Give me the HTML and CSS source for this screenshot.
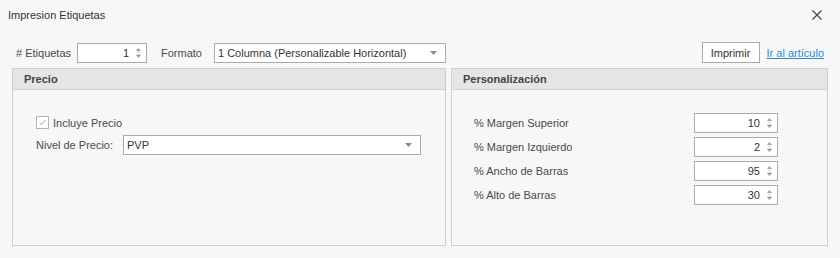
FILE: index.html
```html
<!DOCTYPE html>
<html lang="es">
<head>
  <meta charset="UTF-8">
  <title>Impresion Etiquetas</title>
  <link rel="stylesheet" href="styles.css">
</head>
<body>
  <div class="titlebar">
    <span class="title">Impresion Etiquetas</span>
    <svg class="close" width="10" height="10" viewBox="0 0 10 10">
      <path d="M0.5 0.5 L9.5 9.5 M9.5 0.5 L0.5 9.5" stroke="#444" stroke-width="1.2" fill="none"/>
    </svg>
  </div>

  <div class="toolbar">
    <span class="lbl-etiq">&#35; Etiquetas</span>
    <div class="spin spin-etiq">
      <span class="val">1</span>
      <svg class="arrows" width="7" height="12" viewBox="0 0 7 12">
        <path d="M3.5 1 L6 4 L1 4 Z" fill="#9a9a9a"/>
        <path d="M1.5 5.5 H5.5 M1.5 7.5 H5.5" stroke="#d8d8d8" stroke-width="1"/>
        <path d="M1 8 L6 8 L3.5 11 Z" fill="#9a9a9a"/>
      </svg>
    </div>
    <span class="lbl-formato">Formato</span>
    <div class="combo combo-formato">
      <span class="val">1 Columna (Personalizable Horizontal)</span>
      <svg class="drop" width="7" height="4" viewBox="0 0 7 4"><path d="M0 0 H7 L3.5 4 Z" fill="#8a8a8a"/></svg>
    </div>
    <div class="spacer"></div>
    <button class="btn">Imprimir</button>
    <a class="link" href="#">Ir al art&iacute;culo</a>
  </div>

  <div class="panels">
    <section class="panel panel-precio">
      <div class="panel-head">Precio</div>
      <div class="panel-body">
        <label class="check-row">
          <span class="check">
            <svg width="11" height="11" viewBox="0 0 11 11"><path d="M2.5 5.5 L4.5 7.5 L8.5 3" stroke="#a6a6a6" stroke-width="1" fill="none"/></svg>
          </span>
          Incluye Precio
        </label>
        <div class="field-row">
          <span class="lbl-nivel">Nivel de Precio:</span>
          <div class="combo combo-nivel">
            <span class="val">PVP</span>
            <svg class="drop" width="7" height="4" viewBox="0 0 7 4"><path d="M0 0 H7 L3.5 4 Z" fill="#8a8a8a"/></svg>
          </div>
        </div>
      </div>
    </section>

    <section class="panel panel-pers">
      <div class="panel-head">Personalizaci&oacute;n</div>
      <div class="panel-body grid">
        <span>% Margen Superior</span>
        <div class="spin"><span class="val">10</span><svg class="arrows" width="7" height="12" viewBox="0 0 7 12"><path d="M3.5 1 L6 4 L1 4 Z" fill="#9a9a9a"/><path d="M1.5 5.5 H5.5 M1.5 7.5 H5.5" stroke="#d8d8d8" stroke-width="1"/><path d="M1 8 L6 8 L3.5 11 Z" fill="#9a9a9a"/></svg></div>
        <span>% Margen Izquierdo</span>
        <div class="spin"><span class="val">2</span><svg class="arrows" width="7" height="12" viewBox="0 0 7 12"><path d="M3.5 1 L6 4 L1 4 Z" fill="#9a9a9a"/><path d="M1.5 5.5 H5.5 M1.5 7.5 H5.5" stroke="#d8d8d8" stroke-width="1"/><path d="M1 8 L6 8 L3.5 11 Z" fill="#9a9a9a"/></svg></div>
        <span>% Ancho de Barras</span>
        <div class="spin"><span class="val">95</span><svg class="arrows" width="7" height="12" viewBox="0 0 7 12"><path d="M3.5 1 L6 4 L1 4 Z" fill="#9a9a9a"/><path d="M1.5 5.5 H5.5 M1.5 7.5 H5.5" stroke="#d8d8d8" stroke-width="1"/><path d="M1 8 L6 8 L3.5 11 Z" fill="#9a9a9a"/></svg></div>
        <span>% Alto de Barras</span>
        <div class="spin"><span class="val">30</span><svg class="arrows" width="7" height="12" viewBox="0 0 7 12"><path d="M3.5 1 L6 4 L1 4 Z" fill="#9a9a9a"/><path d="M1.5 5.5 H5.5 M1.5 7.5 H5.5" stroke="#d8d8d8" stroke-width="1"/><path d="M1 8 L6 8 L3.5 11 Z" fill="#9a9a9a"/></svg></div>
      </div>
    </section>
  </div>
</body>
</html>
```

FILE: styles.css
```css
body {
  margin: 0;
  background-color: #f7f7f7;
  font-family: 'Liberation Sans', Arial, sans-serif;
  font-size: 11px;
  color: #4a4a4a;
}
.titlebar {
  height: 30px;
  display: flex;
  align-items: center;
  padding: 0 18px 0 8px;
}
.title {
  flex: 1;
  color: #333;
}
.close {
  display: block;
}
.toolbar {
  display: flex;
  align-items: center;
  height: 21px;
  margin-top: 12px;
  padding: 0 16px;
}
.lbl-etiq {
  width: 55px;
  white-space: nowrap;
  margin-right: 6px;
}
.lbl-formato {
  margin-left: 14px;
  width: 53px;
}
.spin, .combo {
  box-sizing: border-box;
  height: 20px;
  background-color: #fff;
  border: 1px solid #ababab;
  display: flex;
  align-items: center;
  color: #333;
}
.spin {
  width: 84px;
  justify-content: flex-end;
  padding-right: 4px;
}
.spin .val {
  margin-right: 6px;
}
.spin-etiq {
  width: 70px;
}
.arrows {
  display: block;
}
.combo {
  padding: 0 8px 0 3px;
}
.combo .val {
  flex: 1;
  white-space: nowrap;
}
.combo-formato {
  width: 232px;
}
.spacer {
  flex: 1;
}
.btn {
  box-sizing: border-box;
  width: 58px;
  height: 21px;
  background-color: #fff;
  border: 1px solid #ababab;
  font-family: inherit;
  font-size: 11px;
  color: #333;
  padding: 0;
}
.link {
  margin-left: 7px;
  color: #2a8ad8;
  text-decoration: underline;
}
.panels {
  display: flex;
  gap: 5px;
  margin-top: 5px;
  padding: 0 12px;
  height: 178px;
}
.panel {
  box-sizing: border-box;
  border: 1px solid #cecece;
  display: flex;
  flex-direction: column;
}
.panel-precio {
  width: 434px;
}
.panel-pers {
  flex: 1;
}
.panel-head {
  height: 20px;
  background-color: #e5e5e5;
  border-bottom: 1px solid #d2d2d2;
  font-weight: bold;
  color: #444;
  display: flex;
  align-items: center;
  padding-left: 11px;
}
.panel-precio .panel-body {
  padding: 26px 0 0 23px;
}
.check-row {
  display: flex;
  align-items: center;
  gap: 4px;
  height: 13px;
}
.check {
  box-sizing: border-box;
  width: 13px;
  height: 13px;
  border: 1px solid #b5b5b5;
  background-color: #fff;
  display: flex;
  align-items: center;
  justify-content: center;
}
.check svg {
  display: block;
}
.field-row {
  display: flex;
  align-items: center;
  margin-top: 6px;
}
.lbl-nivel {
  width: 87px;
}
.combo-nivel {
  width: 298px;
}
.grid {
  display: grid;
  grid-template-columns: 220px 84px;
  grid-auto-rows: 20px;
  row-gap: 4px;
  align-items: center;
  padding: 23px 0 0 22px;
}
```
